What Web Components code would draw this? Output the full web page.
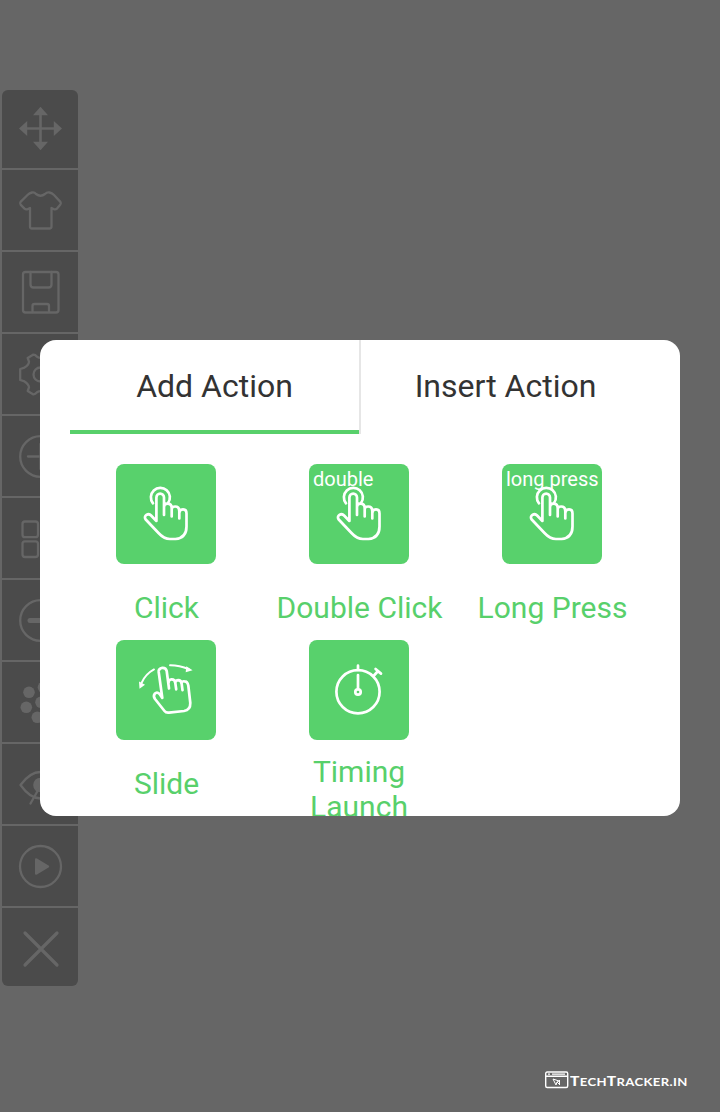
<!DOCTYPE html>
<html lang="en"><head><meta charset="utf-8"><title>Add Action</title>
<style>html,body{margin:0;height:100%;background:#666;font-family:Roboto,sans-serif}</style></head>
<body><clicker-app></clicker-app>
<script>
const toolIcons = {
  move:'<path d="M38.5 23v31M23 38.5h31" stroke-width="2.6"/><path class="f" d="M38.5 16.7l7.5 8.6h-15zM38.5 60.3l7.5-8.6h-15zM17 38.5l8.2-7.5v15zM60 38.5l-8.2-7.5v15z"/>',
  shirt:'<path d="M30 22.5Q27.5 23 25.5 25L18.6 31.9Q17.5 33.3 18.6 34.6L22.5 38.6Q24 40 26 39L28 38V56.5Q28 58.500 30 58.500H47.500Q49.500 58.500 49.500 56.500V38L51.500 39Q53.500 40 55 38.600L58.400 34.600Q59.500 33.300 58.400 31.900L52 25Q50 23 47.500 22.500Q45 22 43 24Q38.500 27.500 34 24Q32.500 22 30 22.500Z"/>',
  save:'<rect x="21" y="20" width="35.5" height="40.5" rx="2.5"/><path d="M28.5 20v12.5q0 3 3 3h15q3 0 3-3V20M30.5 60v-6q0-2 2-2H45q2 0 2 2v6"/>',
  gear:'<path d="M18.2 46V35L22.5 33.6Q26.8 31 27 27.7L25.7 24L31 20.7Q33 20.3 35 22.7Q38.5 25 42 22.7Q44 20.3 46 20.7L51.3 24L50 27.7Q50.2 31 54.5 33.6L58.8 35V46L54.5 47.4Q50.2 50 50 53.3L51.3 57L46 60.3Q44 60.7 42 58.3Q38.5 56 35 58.3Q33 60.7 31 60.3L25.7 57L27 53.3Q26.8 50 22.5 47.4Z"/><circle cx="38.5" cy="40.5" r="7"/>',
  plus:'<circle cx="38.5" cy="40.5" r="20.3"/><path d="M26 40.5h25M38.5 28v25"/>',
  grid:'<rect x="20.5" y="23.5" width="15.5" height="15.7" rx="2.5"/><rect x="20.5" y="43.3" width="15.5" height="15.7" rx="2.5"/><rect x="41" y="23.5" width="15.5" height="15.7" rx="2.5"/><rect x="41" y="43.3" width="15.5" height="15.7" rx="2.5"/>',
  minus:'<circle cx="38.5" cy="40.5" r="20.3"/><path stroke-width="5" d="M28 40.5h21"/>',
  dots:'<g class="f"><circle cx="27" cy="30.3" r="5.8"/><circle cx="24.3" cy="45.3" r="5.8"/><circle cx="35.3" cy="55.3" r="5.8"/><circle cx="39" cy="40.3" r="5.8"/><circle cx="41.5" cy="25.3" r="5.8"/><circle cx="51" cy="34" r="5.8"/><circle cx="50" cy="49" r="5.8"/></g>',
  eye:'<path d="M18.5 41Q28 28 38.5 28T58.5 41Q49 54.5 38.5 54.5T18.5 41Z"/><circle class="f" cx="38.5" cy="41" r="7.3"/><path d="M28.5 59.5L48 25"/>',
  play:'<circle cx="38.5" cy="40.5" r="20.5"/><path class="f" d="M33 33.5q0-2 2-1l11.500 7q1.500 1 0 2l-11.500 7q-2 1-2-1z"/>',
  close:'<path stroke-width="3.2" d="M23 25l32 32M55 25l-32 32"/>'
};
const hand='<g transform="translate(-.5)"><path d="M37.500 39.300A9.500 9.500 0 1 1 52.500 39"/><path d="M48.500 51V33.500a3.800 3.800 0 0 0-7.600 0V57L35.600 51.500C33 48.700 27.500 51.500 30.200 55.500L43 69Q48.500 75 54.500 75H60Q71 74 71 62.500V49.500Q71 45.400 67.500 45.400Q64 45.400 63.800 49M48.500 43Q48.500 39.600 52 39.600Q56.200 39.600 56.200 44V52.500M56.200 45Q56.500 42.500 59.700 42.500Q63.800 42.500 63.800 47V54.500"/></g>';
const actionIcons={
  hand,
  slide:'<path d="M53 48.500L50.700 31Q50 27.600 46.300 27.800Q42.300 28.500 42.700 32L46.300 58L43.600 54Q41 51.500 38.700 53.800Q37 56 39 59L48.500 71Q50 73 53 72.600L68 71Q74.500 70 74.300 63L72.300 45.500Q71.500 41.300 68.500 41.300Q66 41 65.500 43M52.500 43Q52.500 39.600 55.500 39.400Q58.800 39.200 59.300 43L60.200 49.300M59.200 42.500Q60 40.200 62.300 40.200Q65.200 40.300 65.700 44L66.500 50.200"/><path stroke-width="1.900" d="M38 29.400Q29.500 34 25.500 43M54 25.300Q63 25.200 73 29.300"/><path class="f" d="M23 41.500l6 3.200-5.500 4zM70.300 26.300l6.300 4-6.900 2z"/>',
  timer:'<circle cx="49" cy="51.800" r="21.600"/><circle cx="49" cy="52" r="2.700"/><path d="M49 25.700v4.300M49 35v14M64.500 36l4.600-5M66.600 29l5.400 4.600"/>'
};
function define(name,markup){
  const t=document.createElement('template');
  customElements.define(name,class extends HTMLElement{
    constructor(){super();t.innerHTML=typeof markup==='function'?markup(this):markup;this.attachShadow({mode:'open'}).append(t.content.cloneNode(true));}
  });
}
define('tool-button',el=>`<style>:host{display:block;height:80px;background:#4b4b4b;overflow:hidden}:host([end]){height:78px}svg{display:block;fill:none;stroke:#666;stroke-width:2.3;stroke-linecap:round;stroke-linejoin:round}.f{fill:#666;stroke:none}</style><svg width="76" height="80" viewBox="0 0 76 80">${toolIcons[el.getAttribute('icon')]}</svg>`);
define('tool-bar','<style>:host{display:flex;flex-direction:column;gap:2px;width:76px;border-radius:6px;overflow:hidden}</style><slot></slot>');
define('action-tab','<style>:host{display:block;flex:1;box-sizing:border-box;height:94px;border-bottom:4px solid transparent;text-align:center;font-size:32px;line-height:92px;color:#333;white-space:nowrap}:host([active]){border-color:#58d06b}</style><slot></slot>');
define('action-item',el=>`<style>:host{display:flex;flex-direction:column;align-items:center;height:176px}.tile{position:relative;width:100px;height:100px;flex:none;margin-right:1px;border-radius:8px;background:#58d16c}svg{display:block;fill:none;stroke:#fff;stroke-width:2.7;stroke-linecap:round;stroke-linejoin:round}.f{fill:#fff;stroke:none}.badge{position:absolute;left:4px;top:3px;font-size:20px;line-height:24px;color:#fff;white-space:nowrap}.label{margin-top:26px;font-size:30px;line-height:35px;color:#58d06b;text-align:center;white-space:nowrap}:host([two-line]) .label{margin:14px 1px 0 0}</style><div class="tile"><svg width="100" height="100" viewBox="0 0 100 100">${actionIcons[el.getAttribute('icon')]}</svg><span class="badge"><slot name="badge"></slot></span></div><div class="label"><slot></slot></div>`);
define('action-dialog','<style>:host{display:block;box-sizing:border-box;width:640px;height:476px;border-radius:16px;background:#fff;padding:0 30px;overflow:hidden}.tabs{display:flex}.rule{width:2px;height:94px;background:#e6e6e6;flex:none}.grid{display:grid;grid-template-columns:repeat(3,193px);padding-top:30px}</style><div class="tabs"><slot name="first"></slot><div class="rule"></div><slot name="second"></slot></div><div class="grid"><slot></slot></div>');
define('site-mark','<style>:host{display:flex;align-items:flex-start;gap:1px;color:#fff;font:700 11px/18px Lato,sans-serif}svg{display:block}.name{white-space:nowrap;letter-spacing:.3px;padding-top:1px;transform:scaleX(1.19);transform-origin:left}b{font-size:13px}</style><svg width="25" height="18" viewBox="0 0 25 18" fill="none" stroke="#fff" stroke-width="1.400"><rect x="1.700" y="1" width="22" height="15.500" rx="1.500"/><path d="M2 5.200h21.500M4 3.100h2M8 3.100h13" /><path d="M9 8l6 2-2 1 3 3M9 8l3 6 1-3M15.500 9v4" stroke-width="1"/></svg><div class="name"><b>T</b>ECH<b>T</b>RACKER.IN</div>');
define('clicker-app',`<style>:host{display:block;position:relative;box-sizing:border-box;width:720px;height:1112px;padding:90px 0 0 2px;background:#666;overflow:hidden}action-dialog{position:absolute;left:40px;top:340px}site-mark{position:absolute;left:544px;top:1071px}</style>
<tool-bar>${Object.keys(toolIcons).map(k=>`<tool-button icon="${k}"${k==='move'||k==='close'?' end':''}></tool-button>`).join('')}</tool-bar>
<action-dialog><action-tab slot="first" active>Add Action</action-tab><action-tab slot="second">Insert Action</action-tab>
<action-item icon="hand">Click</action-item><action-item icon="hand"><span slot="badge">double</span>Double Click</action-item><action-item icon="hand"><span slot="badge">long press</span>Long Press</action-item><action-item icon="slide">Slide</action-item><action-item icon="timer" two-line>Timing<br>Launch</action-item></action-dialog><site-mark></site-mark>`);
</script></body></html>
